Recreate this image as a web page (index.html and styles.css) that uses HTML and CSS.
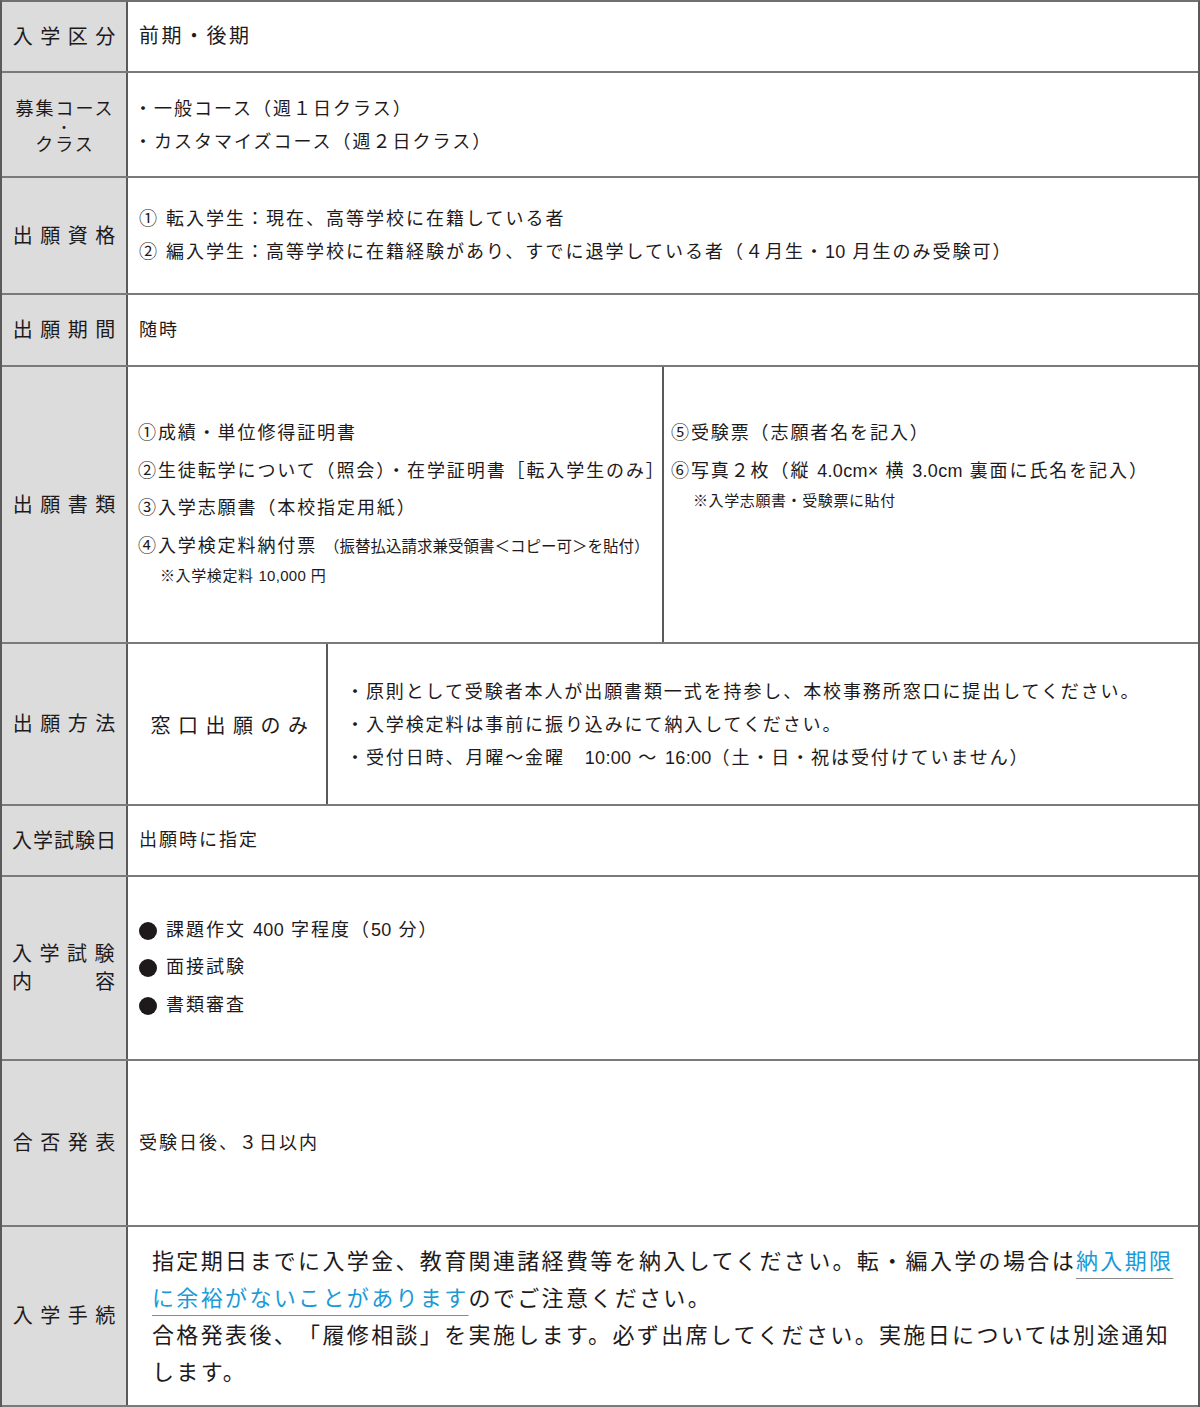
FILE: index.html
```html
<!DOCTYPE html>
<html lang="ja">
<head>
    <meta charset="UTF-8">
    <title>入学要項</title>
    <link rel="stylesheet" href="styles.css">
</head>
<body>
    <div class="sheet">
        <div class="row row-kubun">
            <div class="label">入学区分</div>
            <div class="cell">
                <p class="lead">前期・後期</p>
            </div>
        </div>

        <div class="row row-course">
            <div class="label label-small">
                <span>募集コース</span>
                <span class="label-dot">・</span>
                <span>クラス</span>
            </div>
            <div class="cell cell-tight">
                <p>・一般コース（週１日クラス）</p>
                <p>・カスタマイズコース（週２日クラス）</p>
            </div>
        </div>

        <div class="row row-shikaku">
            <div class="label">出願資格</div>
            <div class="cell">
                <p>① 転入学生：現在、高等学校に在籍している者</p>
                <p>② 編入学生：高等学校に在籍経験があり、すでに退学している者（４月生・<span class="num">10</span> 月生のみ受験可）</p>
            </div>
        </div>

        <div class="row row-kikan">
            <div class="label">出願期間</div>
            <div class="cell">
                <p>随時</p>
            </div>
        </div>

        <div class="row row-shorui">
            <div class="label">出願書類</div>
            <div class="split">
                <div class="split-col split-left">
                    <p>①成績・単位修得証明書</p>
                    <p class="nowrap">②生徒転学について（照会）・在学証明書［転入学生のみ］</p>
                    <p>③入学志願書（本校指定用紙）</p>
                    <p class="nowrap">④入学検定料納付票 <span class="small">（振替払込請求兼受領書＜コピー可＞を貼付）</span></p>
                    <p class="note">※入学検定料 <span class="num">10,000</span> 円</p>
                </div>
                <div class="split-col split-right">
                    <p>⑤受験票（志願者名を記入）</p>
                    <p>⑥写真２枚（縦 <span class="num">4.0cm×</span> 横 <span class="num">3.0cm</span> 裏面に氏名を記入）</p>
                    <p class="note">※入学志願書・受験票に貼付</p>
                </div>
            </div>
        </div>

        <div class="row row-houhou">
            <div class="label">出願方法</div>
            <div class="method">窓口出願のみ</div>
            <div class="cell cell-method">
                <p>・原則として受験者本人が出願書類一式を持参し、本校事務所窓口に提出してください。</p>
                <p>・入学検定料は事前に振り込みにて納入してください。</p>
                <p>・受付日時、月曜～金曜　<span class="num">10:00</span> ～ <span class="num">16:00</span>（土・日・祝は受付けていません）</p>
            </div>
        </div>

        <div class="row row-shikenbi">
            <div class="label label-plain">入学試験日</div>
            <div class="cell">
                <p>出願時に指定</p>
            </div>
        </div>

        <div class="row row-naiyou">
            <div class="label label-two">
                <span>入学試験</span>
                <span class="label-spread"><span>内</span><span>容</span></span>
            </div>
            <div class="cell cell-list">
                <p class="item"><span class="dot"></span><span>課題作文 <span class="num">400</span> 字程度（<span class="num">50</span> 分）</span></p>
                <p class="item"><span class="dot"></span><span>面接試験</span></p>
                <p class="item"><span class="dot"></span><span>書類審査</span></p>
            </div>
        </div>

        <div class="row row-happyou">
            <div class="label">合否発表</div>
            <div class="cell">
                <p>受験日後、３日以内</p>
            </div>
        </div>

        <div class="row row-tetsuzuki">
            <div class="label">入学手続</div>
            <div class="cell cell-notice">
                <p>指定期日までに入学金、教育関連諸経費等を納入してください。転・編入学の場合は<span class="warn">納入期限に余裕がないことがあります</span>のでご注意ください。</p>
                <p>合格発表後、「履修相談」を実施します。必ず出席してください。実施日については別途通知します。</p>
            </div>
        </div>
    </div>
</body>
</html>
```

FILE: styles.css
```css
/* 入学要項テーブル */
body {
    margin: 0;
    font-family: "Liberation Sans", "Noto Sans CJK JP", sans-serif;
    color: #1e1a1b;
    background-color: #fff;
    text-spacing-trim: space-all;
}

p {
    margin: 0;
}

.sheet {
    width: 1200px;
    box-sizing: border-box;
    border-top: 2px solid #707070;
    border-left: 2px solid #5a5a5a;
    border-right: 2px solid #5a5a5a;
}

.row {
    display: flex;
    box-sizing: border-box;
    border-bottom: 2px solid #7a7a7a;
}

.row-kubun { height: 71px; }
.row-course { height: 105px; }
.row-shikaku { height: 117px; }
.row-kikan { height: 72px; }
.row-shorui { height: 277px; }
.row-houhou { height: 162px; }
.row-shikenbi { height: 71px; }
.row-naiyou { height: 184px; }
.row-happyou { height: 166px; }
.row-tetsuzuki { height: 180px; }

/* 見出し列 */
.label {
    flex: none;
    width: 126px;
    box-sizing: border-box;
    background-color: #dcdcdc;
    border-right: 2px solid #5a5a5a;
    display: flex;
    flex-direction: column;
    align-items: center;
    justify-content: center;
    font-size: 20px;
    letter-spacing: 7.5px;
    padding-left: 7.5px;
    line-height: 28px;
}

.label-small {
    font-size: 18px;
    letter-spacing: 2px;
    padding-left: 2px;
    padding-top: 5px;
    line-height: 18px;
}

.label-dot {
    font-size: 14px;
    line-height: 18px;
}

.label-plain {
    letter-spacing: 1px;
    padding-left: 1px;
}

.label-two {
    align-items: flex-start;
    padding-left: 10px;
}

.label-spread {
    display: flex;
    justify-content: space-between;
    width: 103px;
    letter-spacing: 0;
}

/* 本文セル */
.cell {
    flex: 1;
    display: flex;
    flex-direction: column;
    justify-content: center;
    padding: 0 11px;
    font-size: 18px;
    letter-spacing: 2px;
    line-height: 33px;
}

.cell-tight {
    padding-left: 6px;
    padding-top: 2px;
}

.lead {
    font-size: 20px;
    letter-spacing: 2.5px;
}

.num {
    letter-spacing: 0.3px;
}

/* 出願書類 */
.split {
    flex: 1;
    display: flex;
}

.split-col {
    box-sizing: border-box;
    padding-top: 48px;
    font-size: 18px;
    letter-spacing: 1.9px;
    line-height: 37.5px;
    text-spacing-trim: normal;
}

.split-left {
    width: 536px;
    flex: none;
    padding-left: 10px;
    border-right: 2px solid #5a5a5a;
}

.split-right {
    flex: 1;
    padding-left: 7px;
}

.nowrap {
    white-space: nowrap;
}

.small {
    font-size: 15.5px;
    letter-spacing: 0;
}

.note {
    font-size: 15px;
    letter-spacing: 0.6px;
    line-height: 22px;
    padding-left: 22px;
}

/* 出願方法 */
.method {
    flex: none;
    width: 200px;
    box-sizing: border-box;
    border-right: 2px solid #5a5a5a;
    display: flex;
    align-items: center;
    justify-content: center;
    font-size: 20px;
    letter-spacing: 7.5px;
    padding-left: 12px;
}

.cell-method {
    padding-left: 18px;
    letter-spacing: 1.9px;
    padding-top: 2px;
}

/* 試験内容 */
.cell-list {
    line-height: 37.5px;
}

.item {
    display: flex;
    align-items: center;
}

.dot {
    width: 18px;
    height: 18px;
    border-radius: 50%;
    background-color: #1e1a1b;
    margin-right: 9px;
    flex: none;
}

/* 入学手続 */
.cell-notice {
    padding-left: 24px;
    padding-right: 22px;
    padding-top: 2px;
    font-size: 22px;
    letter-spacing: 2.35px;
    line-height: 37px;
}

.warn {
    color: #1a9ad6;
    text-decoration: underline;
    text-decoration-color: #8a8a8a;
    text-decoration-thickness: 1px;
    text-underline-offset: 9px;
}
```
